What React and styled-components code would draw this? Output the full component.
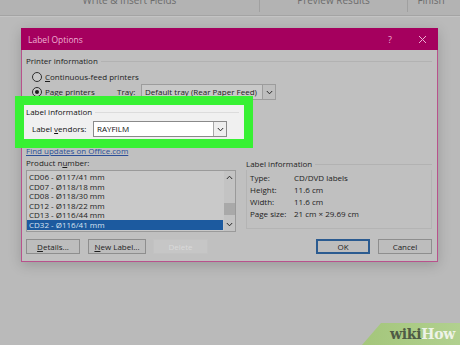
import React from 'react';
import styled, { createGlobalStyle } from 'styled-components';

const Global = createGlobalStyle`
  html, body { margin: 0; padding: 0; }
  body {
    width: 460px; height: 345px; overflow: hidden;
    background: #bababa;
    font-family: "Open Sans", "Noto Sans", sans-serif;
    color: #1d1d1d;
  }
  #root { width: 460px; height: 345px; position: relative; overflow: hidden; }
`;

const Ribbon = styled.div`
  height: 15px;
  background: #b3b3b3;
  border-bottom: 1px solid #a4a4a4;
  box-shadow: 0 1px 0 #c4c4c4;
  display: flex;
  overflow: hidden;
  font-size: 10px;
  color: #6c6c6c;
`;

const RibbonGroup = styled.div`
  width: ${p => p.$w}px;
  height: 12px;
  border-right: ${p => (p.$sep ? '1px solid #a0a0a0' : 'none')};
  display: flex;
  justify-content: center;
  overflow: hidden;
`;

const RibbonLabel = styled.span`
  margin-top: -7px;
  line-height: 14px;
  white-space: nowrap;
`;

const Stage = styled.div`
  padding: 12px 0 0 21px;
`;

const Dialog = styled.div`
  width: 417px;
  box-shadow: 0 3px 12px rgba(0, 0, 0, 0.18);
`;

const TitleBar = styled.div`
  height: 22px;
  background: #a5005e;
  display: flex;
  align-items: center;
  padding-left: 7px;
  color: #eeb0d3;
  font-size: 8.5px;
`;

const TitleText = styled.span`
  flex: 1;
`;

const TitleButton = styled.div`
  width: 32px;
  height: 22px;
  display: flex;
  align-items: center;
  justify-content: center;
  font-size: 9px;
  color: #eeb0d3;
`;

const Body = styled.div`
  background: #c0c0c0;
  border: 1px solid #b8528c;
  border-top: none;
  padding: 5px 5px 7px 4px;
  font-size: 8px;
  line-height: 12px;
`;

const Legend = styled.div`
  height: 12px;
  display: flex;
  align-items: center;
  gap: 3px;
  margin-top: ${p => p.$mt || 0}px;
  padding-right: ${p => p.$pr || 0}px;
  white-space: nowrap;
  &::after {
    content: "";
    flex: 1;
    border-top: 1px solid ${p => p.$line || '#b2b2b2'};
  }
`;

const Row = styled.div`
  display: flex;
  align-items: center;
  height: ${p => p.$h || 12}px;
  margin-top: ${p => p.$mt || 0}px;
  padding-left: ${p => p.$pl || 0}px;
  white-space: nowrap;
`;

const RadioCircle = styled.span`
  width: 10px;
  height: 10px;
  box-sizing: border-box;
  border: 1px solid #2e2e2e;
  border-radius: 50%;
  background: #c8c8c8;
  display: flex;
  align-items: center;
  justify-content: center;
  margin: 0 3px 0 6px;
  flex: none;
  &::after {
    content: "";
    width: 4px;
    height: 4px;
    border-radius: 50%;
    background: ${p => (p.$on ? '#1d1d1d' : 'transparent')};
  }
`;

const FixedLabel = styled.span`
  width: ${p => p.$w}px;
  flex: none;
`;

const U = styled.span`
  text-decoration: underline;
  text-underline-offset: 1px;
`;

const Select = styled.div`
  width: ${p => p.$w}px;
  height: 16px;
  box-sizing: border-box;
  border: 1px solid ${p => (p.$light ? '#8a8a8a' : '#9c9c9c')};
  background: ${p => (p.$light ? '#ffffff' : '#c9c9c9')};
  display: flex;
  align-items: stretch;
  flex: none;
`;

const SelectText = styled.span`
  flex: 1;
  padding-left: 3px;
  line-height: 14px;
`;

const SelectButton = styled.span`
  width: 12px;
  border-left: 1px solid ${p => (p.$light ? '#a8a8a8' : '#9c9c9c')};
  background: ${p => (p.$light ? '#eeeeee' : '#bebebe')};
  display: flex;
  align-items: center;
  justify-content: center;
`;

const Highlight = styled.section`
  position: relative;
  z-index: 1;
  margin: 5px 0 0 -2px;
  width: 220px;
  height: 34px;
  box-sizing: border-box;
  padding: 1px 0 2px 2px;
  background: #f0f0f0;
  outline: 9px solid #37f133;
  color: #111;
`;

const Link = styled.div`
  margin-top: 6px;
  height: 12px;
  color: #2c4f98;
  text-decoration: underline;
  text-underline-offset: 1px;
`;

const Columns = styled.div`
  display: flex;
  gap: 10px;
`;

const LeftCol = styled.div`
  width: 210px;
`;

const RightCol = styled.div`
  width: 186px;
  padding-top: 1px;
`;

const List = styled.div`
  margin-top: 1px;
  height: 62px;
  box-sizing: border-box;
  border: 1px solid #9a9a9a;
  background: #c9c9c9;
  display: flex;
`;

const Items = styled.div`
  flex: 1;
  padding-top: 1px;
  overflow: hidden;
`;

const Item = styled.div`
  height: 9.6px;
  line-height: 9.6px;
  padding-left: 2px;
  margin-right: 1px;
  background: ${p => (p.$sel ? '#1c5a9f' : 'transparent')};
  color: ${p => (p.$sel ? '#d6e3f0' : 'inherit')};
  white-space: nowrap;
`;

const ScrollBar = styled.div`
  width: 11px;
  background: #c3c3c3;
  display: flex;
  flex-direction: column;
`;

const ScrollArrow = styled.div`
  height: 13px;
  display: flex;
  align-items: center;
  justify-content: center;
`;

const ScrollTrack = styled.div`
  flex: 1;
  display: flex;
  flex-direction: column;
`;

const Thumb = styled.div`
  margin-top: 19px;
  height: 12px;
  background: #a9a9a9;
`;

const InfoBox = styled.div`
  border: 1px solid #b4b4b4;
  border-top: none;
  padding: 2px 0 8px 3px;
`;

const InfoRow = styled.div`
  display: flex;
  height: 12px;
  white-space: nowrap;
`;

const InfoKey = styled.span`
  width: 44px;
  flex: none;
`;

const Buttons = styled.div`
  margin-top: 7px;
  display: flex;
  height: 15px;
`;

const Btn = styled.div`
  width: ${p => p.$w}px;
  margin-left: ${p => p.$ml || 0}px;
  height: 15px;
  box-sizing: border-box;
  border: 1px solid ${p => (p.$primary ? '#2b5b90' : p.$disabled ? '#c2c2c2' : '#8e8e8e')};
  box-shadow: ${p => (p.$primary ? 'inset 0 0 0 1px #2b5b90' : 'none')};
  background: ${p => (p.$disabled ? '#c6c6c6' : '#bdbdbd')};
  color: ${p => (p.$disabled ? '#dadada' : '#1d1d1d')};
  display: flex;
  align-items: center;
  justify-content: center;
  line-height: 12px;
`;

const Spacer = styled.div`
  flex: 1;
`;

const Watermark = styled.div`
  position: absolute;
  right: 0;
  bottom: 0;
  width: 98px;
  height: 22px;
  clip-path: polygon(19px 0, 100% 0, 100% 100%, 0 100%);
  background: linear-gradient(90deg, #a4c67b, #b1d08f);
  display: flex;
  align-items: center;
  justify-content: flex-end;
  padding-right: 5px;
  box-sizing: border-box;
  font-family: "DejaVu Serif", "Liberation Serif", serif;
  font-weight: bold;
  font-size: 14px;
  letter-spacing: -0.3px;
`;

const WikiPart = styled.span`
  color: ${p => p.$c};
`;

const Chevron = ({ up, color = '#2a2a2a' }) => (
  <svg width="7" height="5" viewBox="0 0 7 5">
    <polyline
      points={up ? '0.8,4 3.5,1.2 6.2,4' : '0.8,1 3.5,3.8 6.2,1'}
      fill="none"
      stroke={color}
      strokeWidth="1"
    />
  </svg>
);

const CloseIcon = () => (
  <svg width="9" height="9" viewBox="0 0 9 9">
    <path d="M1 1 L8 8 M8 1 L1 8" stroke="#eeb0d3" strokeWidth="1" />
  </svg>
);

const items = [
  'CD06 - Ø117/41 mm',
  'CD07 - Ø118/18 mm',
  'CD08 - Ø118/30 mm',
  'CD12 - Ø118/22 mm',
  'CD13 - Ø116/44 mm',
  'CD32 - Ø116/41 mm',
];

const info = [
  ['Type:', 'CD/DVD labels'],
  ['Height:', '11.6 cm'],
  ['Width:', '11.6 cm'],
  ['Page size:', '21 cm × 29.69 cm'],
];

export default function App() {
  return (
    <>
      <Global />
      <Ribbon>
        <RibbonGroup $w={259} $sep>
          <RibbonLabel>Write &amp; Insert Fields</RibbonLabel>
        </RibbonGroup>
        <RibbonGroup $w={147} $sep>
          <RibbonLabel>Preview Results</RibbonLabel>
        </RibbonGroup>
        <RibbonGroup $w={46}>
          <RibbonLabel>Finish</RibbonLabel>
        </RibbonGroup>
      </Ribbon>
      <Stage>
        <Dialog>
          <TitleBar>
            <TitleText>Label Options</TitleText>
            <TitleButton>?</TitleButton>
            <TitleButton>
              <CloseIcon />
            </TitleButton>
          </TitleBar>
          <Body>
            <Legend>Printer information</Legend>
            <Row $h={14} $mt={3}>
              <RadioCircle />
              <span>
                <U>C</U>ontinuous-feed printers
              </span>
            </Row>
            <Row $h={16}>
              <RadioCircle $on />
              <FixedLabel $w={72}>
                P<U>a</U>ge printers
              </FixedLabel>
              <FixedLabel $w={24}>
                T<U>r</U>ay:
              </FixedLabel>
              <Select $w={135}>
                <SelectText>Default tray (Rear Paper Feed)</SelectText>
                <SelectButton>
                  <Chevron />
                </SelectButton>
              </Select>
            </Row>
            <Highlight>
              <Legend $pr={5} $line="#dcdcdc">Label information</Legend>
              <Row $h={16} $mt={3} $pl={6}>
                <FixedLabel $w={61}>
                  Label <U>v</U>endors:
                </FixedLabel>
                <Select $w={134} $light>
                  <SelectText>RAYFILM</SelectText>
                  <SelectButton $light>
                    <Chevron />
                  </SelectButton>
                </Select>
              </Row>
            </Highlight>
            <Link>Find updates on Office.com</Link>
            <Columns>
              <LeftCol>
                <Row>
                  Product n<U>u</U>mber:
                </Row>
                <List>
                  <Items>
                    {items.map((t, i) => (
                      <Item key={t} $sel={i === items.length - 1}>
                        {t}
                      </Item>
                    ))}
                  </Items>
                  <ScrollBar>
                    <ScrollArrow>
                      <Chevron up />
                    </ScrollArrow>
                    <ScrollTrack>
                      <Thumb />
                    </ScrollTrack>
                    <ScrollArrow>
                      <Chevron />
                    </ScrollArrow>
                  </ScrollBar>
                </List>
              </LeftCol>
              <RightCol>
                <Legend>Label information</Legend>
                <InfoBox>
                  {info.map(([k, v]) => (
                    <InfoRow key={k}>
                      <InfoKey>{k}</InfoKey>
                      <span>{v}</span>
                    </InfoRow>
                  ))}
                </InfoBox>
              </RightCol>
            </Columns>
            <Buttons>
              <Btn $w={54}>
                <span>
                  <U>D</U>etails...
                </span>
              </Btn>
              <Btn $w={58} $ml={8}>
                <span>
                  <U>N</U>ew Label...
                </span>
              </Btn>
              <Btn $w={55} $ml={7} $disabled>
                Delete
              </Btn>
              <Spacer />
              <Btn $w={54} $primary>
                OK
              </Btn>
              <Btn $w={54} $ml={8}>
                Cancel
              </Btn>
            </Buttons>
          </Body>
        </Dialog>
      </Stage>
      <Watermark>
        <WikiPart $c="#4f5b45">wiki</WikiPart>
        <WikiPart $c="#eef3e8">How</WikiPart>
      </Watermark>
    </>
  );
}
